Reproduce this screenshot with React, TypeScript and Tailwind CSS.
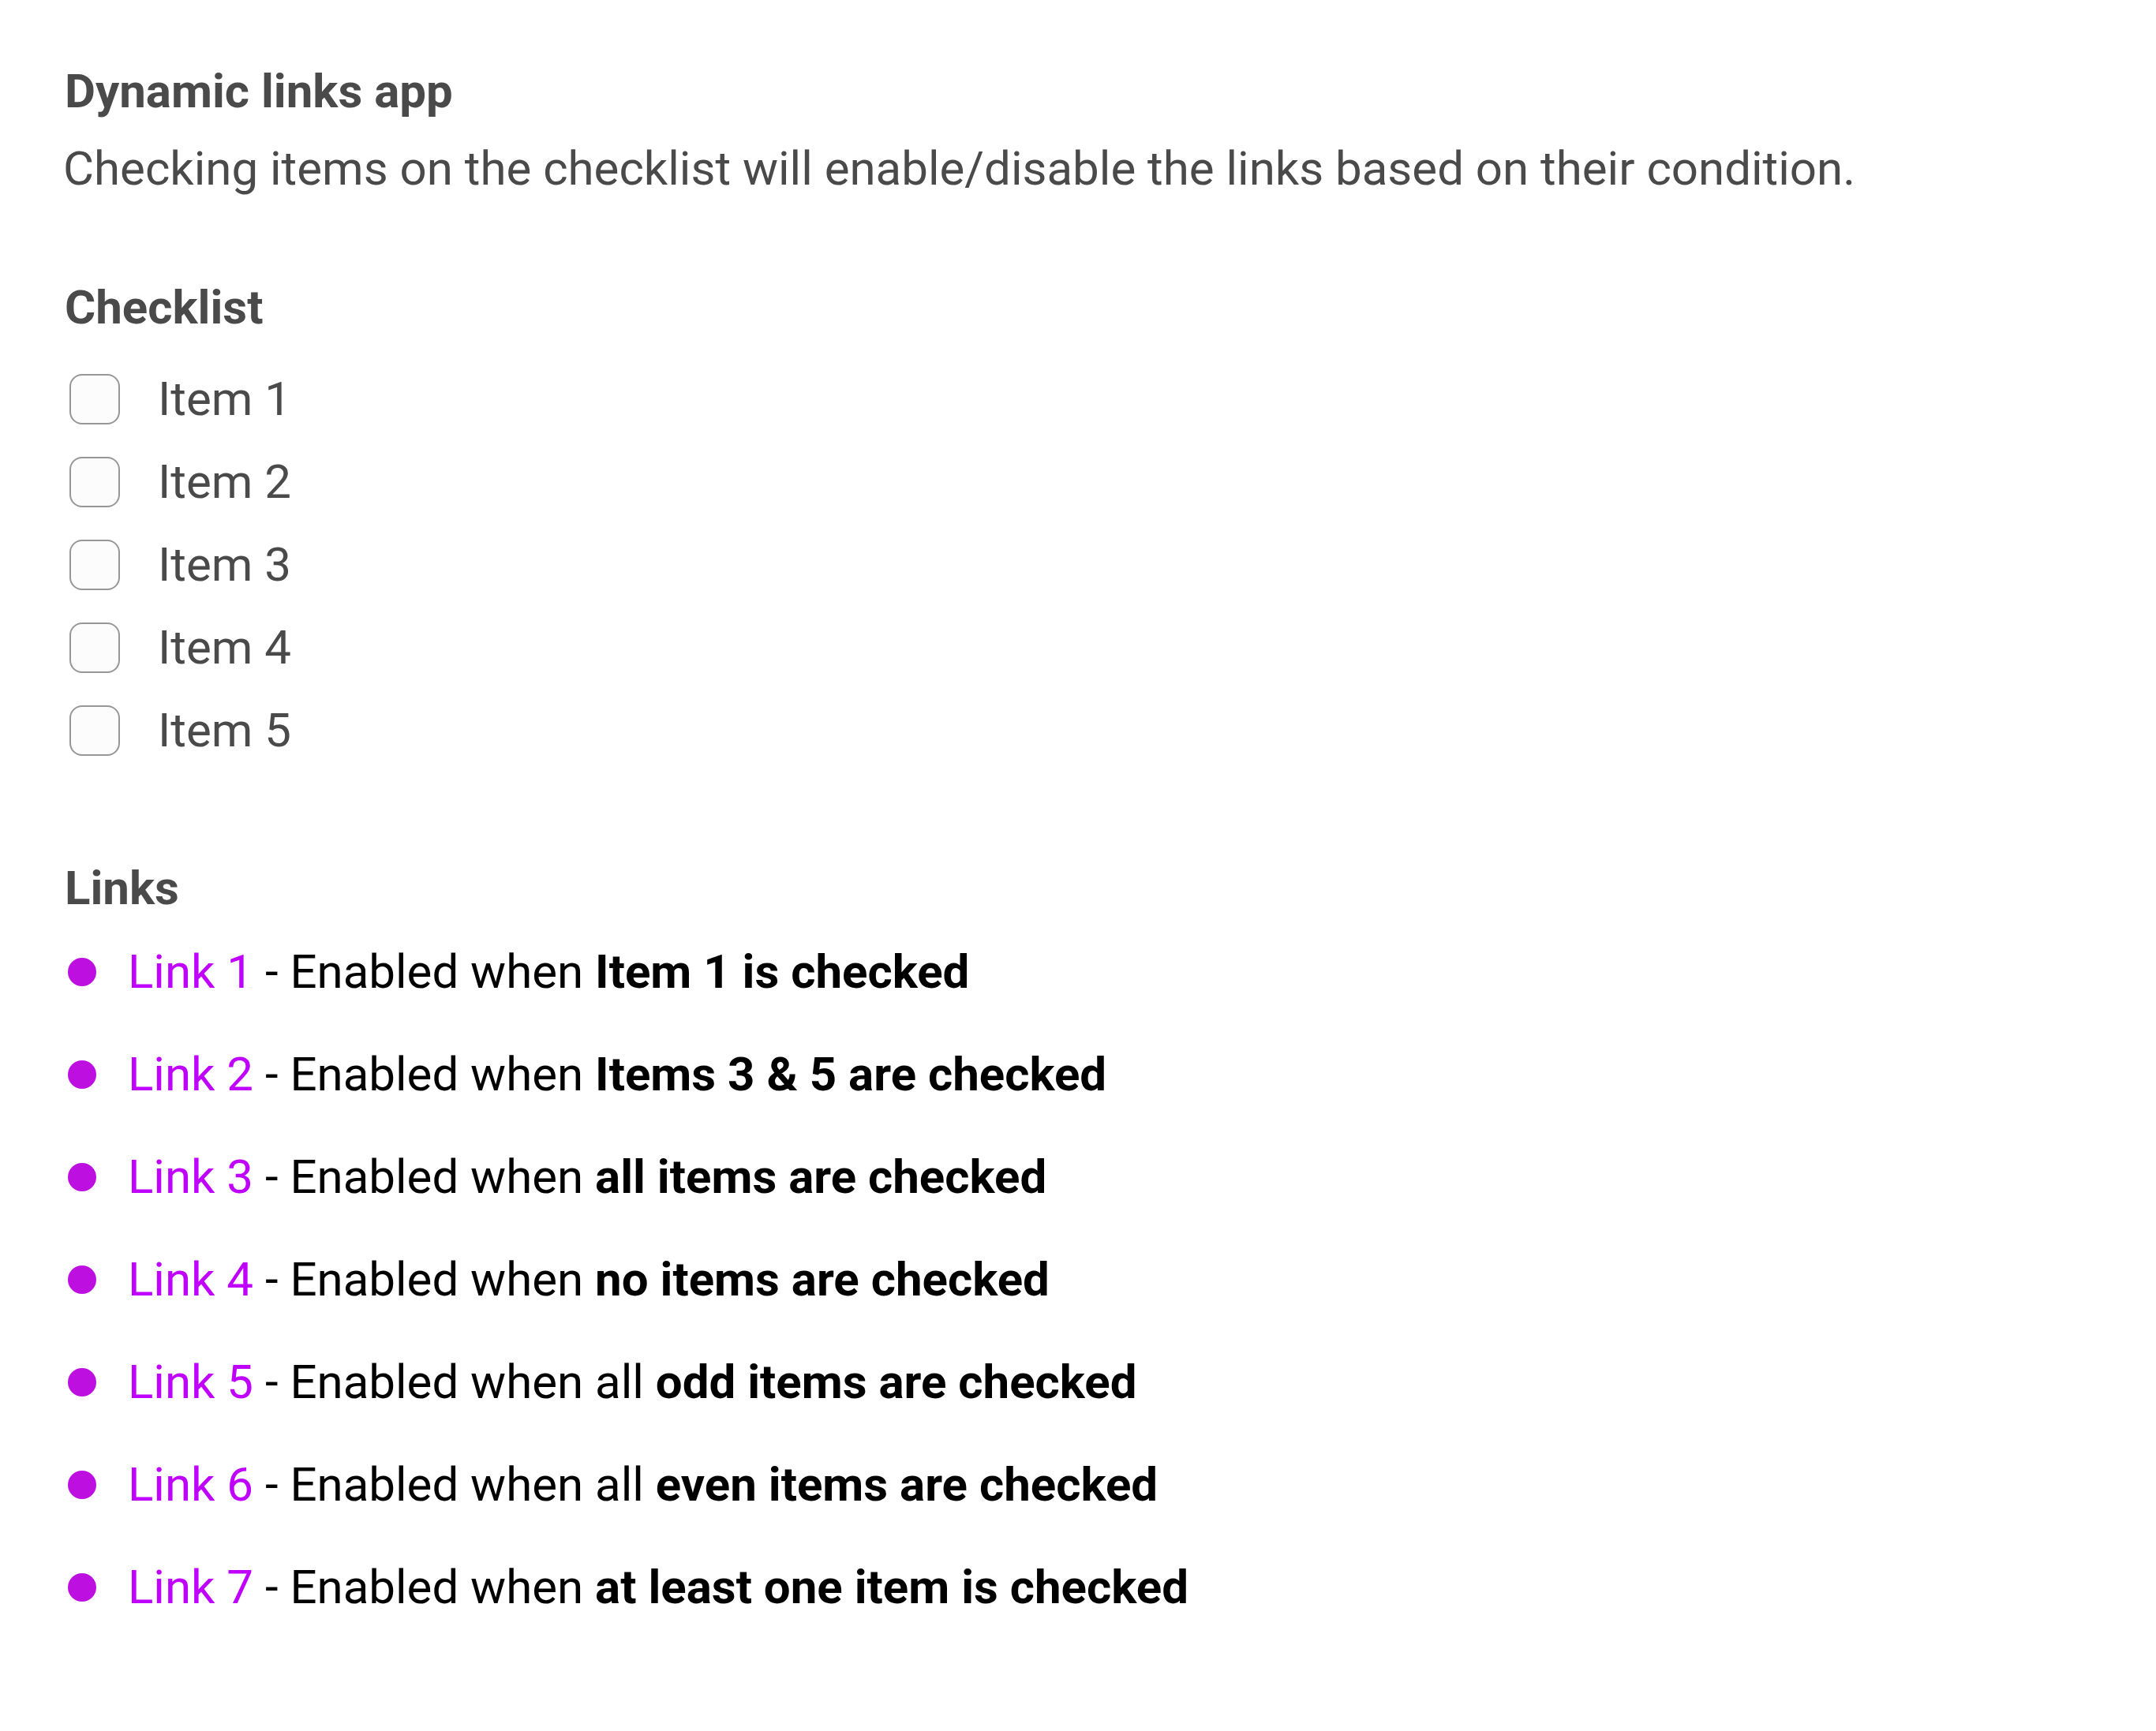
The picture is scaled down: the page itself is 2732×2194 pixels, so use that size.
import { ReactNode, useState } from "react";

const items = ["Item 1", "Item 2", "Item 3", "Item 4", "Item 5"];

type LinkRow = {
  name: string;
  text: string;
  condition: string;
};

const links: LinkRow[] = [
  { name: "Link 1", text: "Enabled when", condition: "Item 1 is checked" },
  { name: "Link 2", text: "Enabled when", condition: "Items 3 & 5 are checked" },
  { name: "Link 3", text: "Enabled when", condition: "all items are checked" },
  { name: "Link 4", text: "Enabled when", condition: "no items are checked" },
  { name: "Link 5", text: "Enabled when all", condition: "odd items are checked" },
  { name: "Link 6", text: "Enabled when all", condition: "even items are checked" },
  { name: "Link 7", text: "Enabled when", condition: "at least one item is checked" },
];

function Heading({ children }: { children: ReactNode }) {
  return <h2 className="pl-0.5 font-bold">{children}</h2>;
}

export default function App() {
  const [checked, setChecked] = useState<boolean[]>(items.map(() => false));

  const toggle = (index: number) =>
    setChecked((state) => state.map((value, i) => (i === index ? !value : value)));

  return (
    <main className="min-h-screen bg-white px-20 pt-[67px] pb-16 font-[Roboto,sans-serif] text-[60px] leading-[98px] text-[#4a4a4a]">
      <header>
        <Heading>Dynamic links app</Heading>
        <p>Checking items on the checklist will enable/disable the links based on their condition.</p>
      </header>

      <section className="mt-[78px]">
        <Heading>Checklist</Heading>
        <ul className="mt-3.5">
          {items.map((item, index) => (
            <li key={item}>
              <label className="flex h-[105px] items-center gap-12 pl-2">
                <input
                  type="checkbox"
                  checked={checked[index]}
                  onChange={() => toggle(index)}
                  className="size-16 appearance-none rounded-2xl border-2 border-[#979797] bg-[#fcfcfc] checked:bg-[#bd10e0]"
                />
                {item}
              </label>
            </li>
          ))}
        </ul>
      </section>

      <section className="mt-[99px]">
        <Heading>Links</Heading>
        <ul className="mt-2 flex flex-col gap-8 text-black">
          {links.map((link) => (
            <li key={link.name} className="flex items-center gap-10 pl-1.5">
              <span className="size-9 rounded-full bg-[#bd10e0]" />
              <p>
                <a href="#" className="text-[#bf00ff]">{link.name}</a>
                {" - "}
                {link.text} <strong className="font-bold">{link.condition}</strong>
              </p>
            </li>
          ))}
        </ul>
      </section>
    </main>
  );
}
